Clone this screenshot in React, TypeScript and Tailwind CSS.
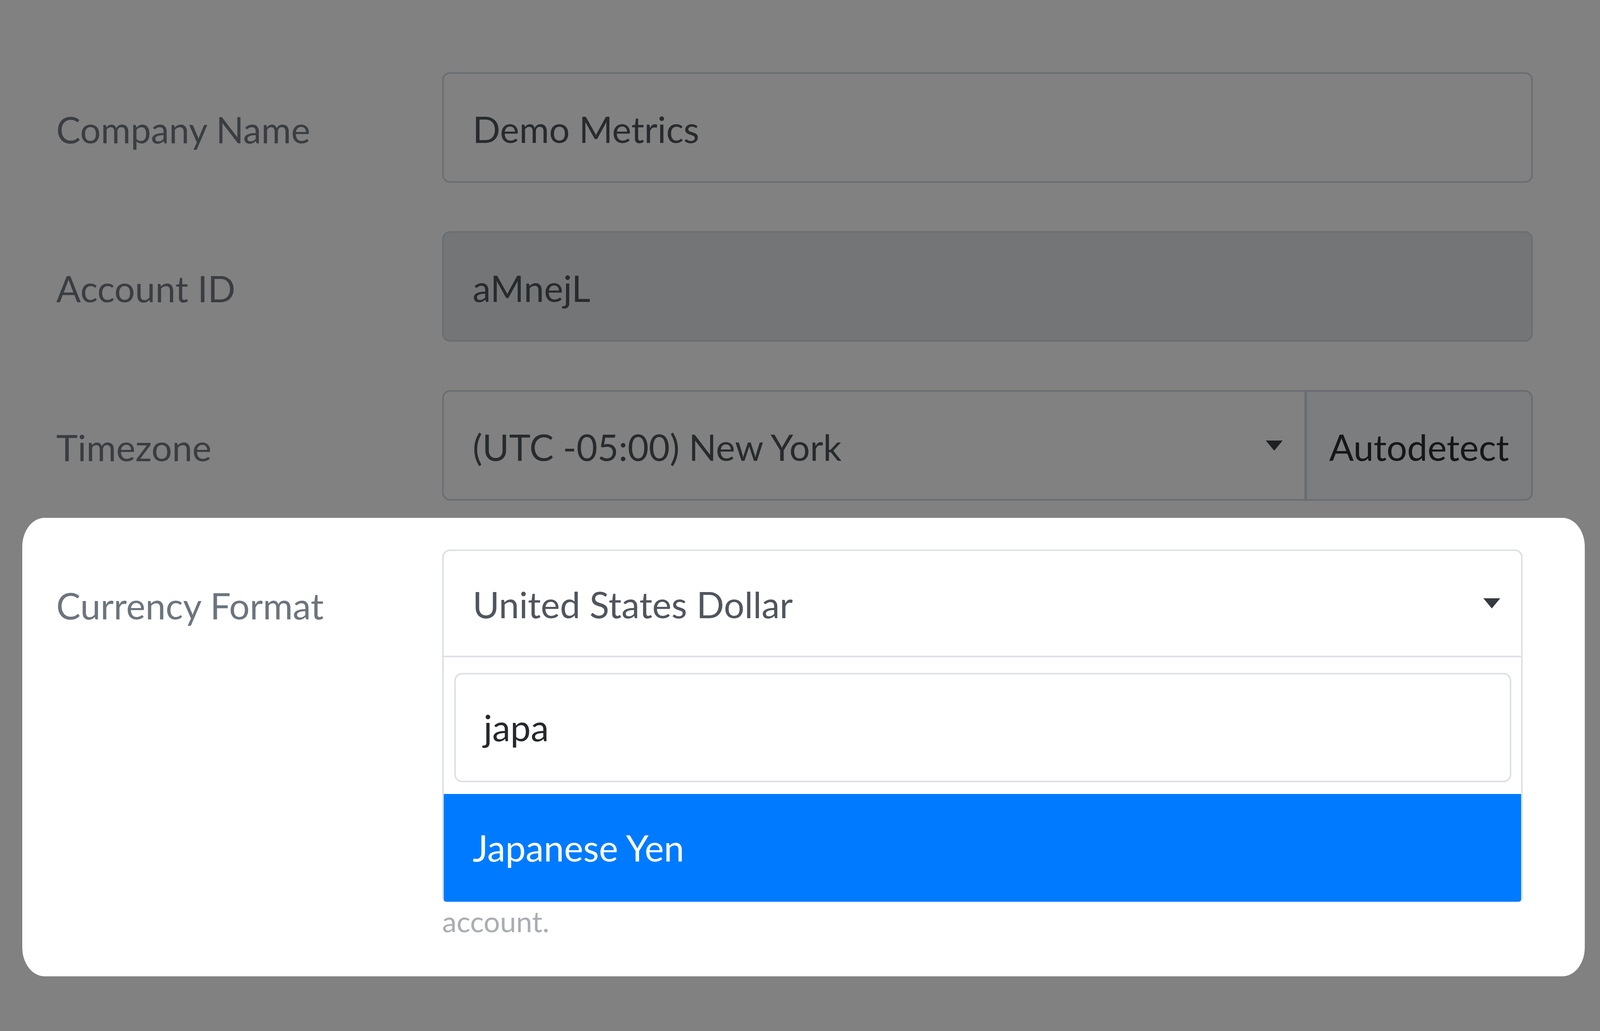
import React from 'react'

const Caret = ({ className }: { className: string }) => (
  <svg viewBox="0 0 10 6" className={className} aria-hidden>
    <path d="M0 0h10L5 6z" fill="currentColor" />
  </svg>
)

function Row({ label, children }: { label: string; children: React.ReactNode }) {
  return (
    <div className="flex items-start">
      <div className="w-[988px] shrink-0 pt-[10px] text-[93px] leading-[273px] text-[#3a3e42]">{label}</div>
      {children}
    </div>
  )
}

export default function App() {
  return (
    <div className="h-[2640px] w-full overflow-hidden bg-[#818181] pl-[144px] pt-[185px] font-['Lato','Open_Sans',sans-serif]">
      <div className="flex flex-col gap-[124px]">
        <Row label="Company Name">
          <div className="flex h-[283px] w-[2792px] items-center rounded-[20px] border-[4px] border-[#6b6e71] pb-[2px] pl-[74px] pt-[10px] text-[93px] text-[#282b2e]">
            Demo Metrics
          </div>
        </Row>
        <Row label="Account ID">
          <div className="flex h-[283px] w-[2792px] items-center rounded-[20px] border-[4px] border-[#6b6e71] bg-[#747576] pb-[2px] pl-[74px] pt-[10px] text-[93px] text-[#282b2e]">
            aMnejL
          </div>
        </Row>
        <Row label="Timezone">
          <div className="flex h-[283px] w-[2792px]">
            <div className="flex flex-1 items-center justify-between rounded-l-[20px] border-[4px] border-[#6b6e71] pl-[74px] pr-[55px] text-[93px] text-[#282b2e]">
              <span className="pt-[8px]">(UTC -05:00) New York</span>
              <Caret className="h-[26px] w-[44px] text-[#1e2124]" />
            </div>
            <div className="flex w-[581px] items-center justify-center rounded-r-[20px] border-[4px] border-l-[3px] border-[#686d72] bg-[#7c7d7f] pt-[8px] text-[93px] text-[#151719]">
              Autodetect
            </div>
          </div>
        </Row>
      </div>

      <div className="-ml-[87px] mt-[44px] flex w-[4000px] items-start rounded-[57px/74px] bg-white pb-[91px] pl-[87px] pt-[81px]">
        <div className="w-[988px] shrink-0 pt-[10px] text-[93px] leading-[266px] text-[#6c757d]">Currency Format</div>
        <div className="flex w-[2766px] flex-col">
          <div className="flex h-[276px] items-center justify-between rounded-t-[20px] border-[4px] border-[#dde1e5] pl-[74px] pr-[53px] text-[93px] text-[#4f565d]">
            <span className="pt-[6px]">United States Dollar</span>
            <Caret className="h-[26px] w-[44px] text-[#343a40]" />
          </div>
          <div className="flex flex-col rounded-b-[10px] border-x-[4px] border-[#dde1e5] pt-[40px]">
            <div className="ml-[27px] mr-[25px] flex h-[280px] items-center rounded-[20px] border-[4px] border-[#dde1e5] pl-[71px] text-[93px] text-[#25292d]">
              japa
            </div>
            <div className="mt-[30px] flex h-[276px] items-center rounded-b-[6px] bg-[#007bff] pl-[74px] text-[93px] text-white">
              Japanese Yen
            </div>
          </div>
          <div className="text-[74px] leading-[100px] text-[#a9aeb3]">account.</div>
        </div>
      </div>
    </div>
  )
}
